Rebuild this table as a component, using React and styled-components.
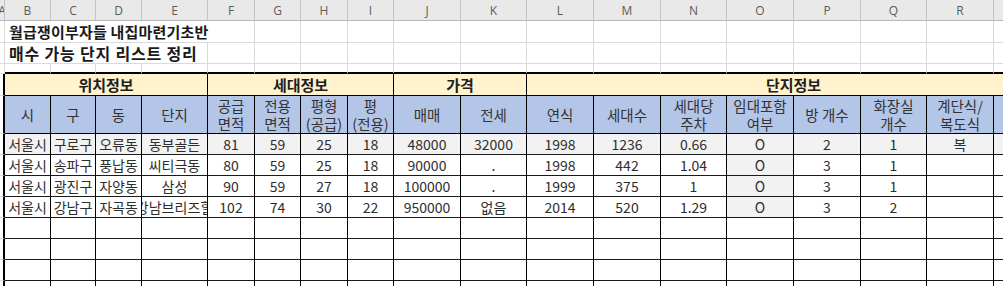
import styled, { createGlobalStyle } from 'styled-components';

const COLS = [5, 46, 45, 46, 66, 47, 46, 47, 46, 67, 66, 67, 67, 66, 67, 67, 66, 67, 67];
const LETTERS = 'ABCDEFGHIJKLMNOPQRS'.split('');
const FONT = `'Noto Sans CJK KR', 'Noto Sans', sans-serif`;

const SUB_HEADS = [
    '시', '구', '동', '단지', '공급\n면적', '전용\n면적', '평형\n(공급)', '평\n(전용)',
    '매매', '전세', '연식', '세대수', '세대당\n주차', '임대포함\n여부', '방 개수',
    '화장실\n개수', '계단식/\n복도식', '',
];

const ROWS = [
    ['서울시', '구로구', '오류동', '동부골든', '81', '59', '25', '18', '48000', '32000', '1998', '1236', '0.66', 'O', '2', '1', '복', ''],
    ['서울시', '송파구', '풍납동', '씨티극동', '80', '59', '25', '18', '90000', '.', '1998', '442', '1.04', 'O', '3', '1', '', ''],
    ['서울시', '광진구', '자양동', '삼성', '90', '59', '27', '18', '100000', '.', '1999', '375', '1', 'O', '3', '1', '', ''],
    ['서울시', '강남구', '자곡동', '강남브리즈힐', '102', '74', '30', '22', '950000', '없음', '2014', '520', '1.29', 'O', '3', '2', '', ''],
];

const GROUPS = [
    { label: '위치정보', span: 4 },
    { label: '세대정보', span: 4 },
    { label: '가격', span: 2 },
    { label: '단지정보', span: 8 },
];

const GlobalStyle = createGlobalStyle`
    body {
        margin: 0;
        overflow: hidden;
        background: #ffffff;
        font-family: ${FONT};
    }
`;

const Sheet = styled.div`
    width: 1003px;
    height: 286px;
    overflow: hidden;
    background: #ffffff;
`;

const Row = styled.div`
    display: grid;
    grid-template-columns: ${COLS.map((c) => `${c}px`).join(' ')};
    height: ${(props) => props.$h}px;
    width: ${COLS.reduce((a, b) => a + b, 0)}px;
`;

const Cell = styled.div`
    grid-column: span ${(props) => props.$span || 1};
    box-sizing: border-box;
    display: flex;
    align-items: center;
    justify-content: center;
    overflow: hidden;
    white-space: nowrap;
    border-right: 1px solid #dadada;
    border-bottom: 1px solid #dadada;
    background: #ffffff;
`;

const Letter = styled(Cell)`
    background: #e9e9e9;
    border-right-color: #c4c4c4;
    border-bottom: 1px solid #b8b8b8;
    color: #5c5c5c;
    font-size: 12px;
    font-family: 'Open Sans', 'Noto Sans', sans-serif;
`;

const Title = styled(Cell)`
    justify-content: flex-start;
    padding-left: 4px;
    overflow: visible;
    line-height: 1;
    font-weight: bold;
    color: #1a1a1a;
    font-size: ${(props) => props.$size}px;
    letter-spacing: ${(props) => props.$track}px;
`;

const Gap = styled(Cell)`
    border-bottom: ${(props) => (props.$edge ? '2px solid #000' : '1px solid #dadada')};
`;

const Edge = styled(Cell)`
    border-right: 2px solid #000;
`;

const Group = styled(Cell)`
    background: #fff2cc;
    border-right: 1px solid #000;
    border-bottom: 1px solid #000;
    font-size: 15px;
    font-weight: bold;
    color: #202020;
`;

const Head = styled(Cell)`
    background: #b4c6e7;
    border-right: 1px solid #000;
    border-bottom: 1px solid #000;
    font-size: 14.5px;
    line-height: 18px;
    color: #333333;
    white-space: pre;
    text-align: center;
`;

const Data = styled(Cell)`
    background: ${(props) => (props.$shade ? '#f2f2f2' : '#ffffff')};
    border-right: 1px solid #000;
    border-bottom: 1px solid #1a1a1a;
    font-size: 14px;
    color: #2e2e2e;
`;

const App = () => (
    <>
        <GlobalStyle />
        <Sheet>
            <Row $h={21}>
                {LETTERS.map((l) => (
                    <Letter key={l}>{l}</Letter>
                ))}
            </Row>
            <Row $h={22}>
                <Cell />
                <Title $span={5} $size={15} $track={0.2}>
                    월급쟁이부자들 내집마련기초반
                </Title>
                {COLS.slice(6).map((_, i) => (
                    <Cell key={i} />
                ))}
            </Row>
            <Row $h={21}>
                <Cell />
                <Title $span={4} $size={16} $track={0.8}>
                    매수 가능 단지 리스트 정리
                </Title>
                {COLS.slice(5).map((_, i) => (
                    <Cell key={i} />
                ))}
            </Row>
            <Row $h={10}>
                {COLS.map((_, i) => (
                    <Gap key={i} $edge={i > 0} />
                ))}
            </Row>
            <Row $h={22}>
                <Edge />
                {GROUPS.map((g) => (
                    <Group key={g.label} $span={g.span}>
                        {g.label}
                    </Group>
                ))}
            </Row>
            <Row $h={38}>
                <Edge />
                {SUB_HEADS.map((h, i) => (
                    <Head key={i}>{h}</Head>
                ))}
            </Row>
            {ROWS.map((r, ri) => (
                <Row $h={21} key={ri}>
                    <Edge />
                    {r.map((v, i) => (
                        <Data key={i} $shade={ri === 0 || i === 13}>
                            {v}
                        </Data>
                    ))}
                </Row>
            ))}
            {[0, 1, 2, 3].map((ri) => (
                <Row $h={21} key={`e${ri}`}>
                    <Edge />
                    {SUB_HEADS.map((_, i) => (
                        <Data key={i} />
                    ))}
                </Row>
            ))}
        </Sheet>
    </>
);

export default App;
